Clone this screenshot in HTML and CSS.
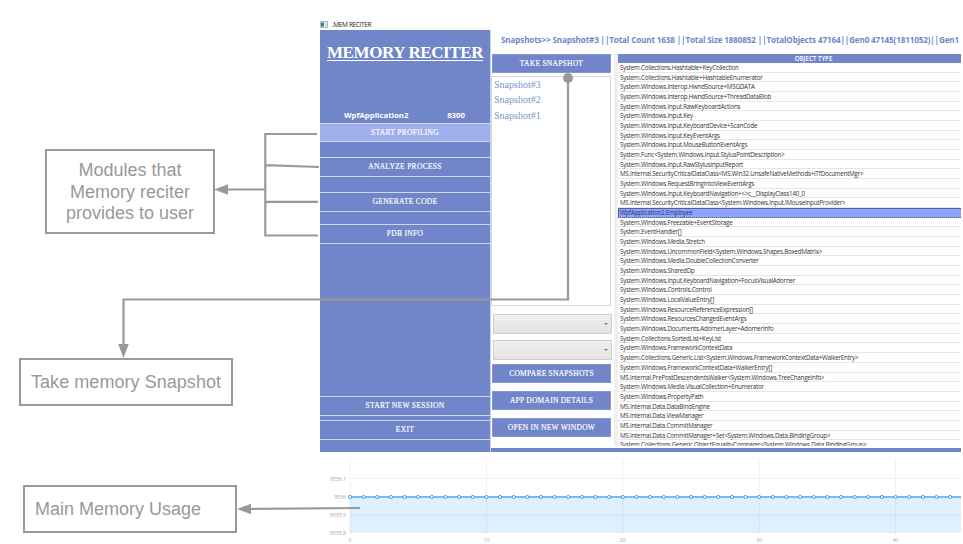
FILE: index.html
```html
<!DOCTYPE html>
<html lang="en">
<head>
<meta charset="utf-8">
<title>.MEM RECITER</title>
<link rel="stylesheet" href="styles.css">
</head>
<body>
<main class="window">
  <header class="titlebar">
    <svg class="app-icon" width="8" height="7" viewBox="0 0 8 7"><rect x=".5" y=".5" width="7" height="6" fill="#eef1f3" stroke="#b4bcc4"/><rect x="1" y="1.5" width="3" height="4" fill="#347f86"/><rect x="5" y="1.5" width="2" height="4" fill="#d5dadd"/></svg>
    <span>.MEM RECITER</span>
  </header>
  <div class="body">
    <nav class="sidebar">
      <div class="brand">
        <h1>MEMORY RECITER</h1>
        <p class="process"><span>WpfApplication2</span><span>8300</span></p>
      </div>
      <div class="nav-item active"><span>START PROFILING</span></div>
      <div class="nav-item second"><span>ANALYZE PROCESS</span></div>
      <div class="nav-item third"><span>GENERATE CODE</span></div>
      <div class="nav-item fourth"><span>PDB INFO</span></div>
      <div class="nav-item session"><span>START NEW SESSION</span></div>
      <div class="nav-item exit"><span>EXIT</span></div>
    </nav>
    <section class="content">
      <p class="summary">Snapshots&gt;&gt; Snapshot#3 ||Total Count 1638 ||Total Size 1880852 ||TotalObjects 47164||Gen0 47145(1811052)||Gen1</p>
      <div class="panes">
        <div class="snapshots">
          <div class="button">TAKE SNAPSHOT</div>
          <ul class="list"><li>Snapshot#3</li><li>Snapshot#2</li><li>Snapshot#1</li></ul>
          <div class="combo"></div>
          <div class="combo"></div>
          <div class="button low">COMPARE SNAPSHOTS</div>
          <div class="button low">APP DOMAIN DETAILS</div>
          <div class="button low">OPEN IN NEW WINDOW</div>
        </div>
        <div class="table">
          <div class="table-head">OBJECT TYPE</div>
          <div class="rows" id="rows"></div>
        </div>
      </div>
    </section>
  </div>
  <svg class="chart" id="chart" width="641" height="92" viewBox="320 452 641 92"></svg>
</main>

<div class="note modules">Modules that<br>Memory reciter<br>provides to user</div>
<div class="note take">Take memory Snapshot</div>
<div class="note usage">Main Memory Usage</div>
<svg class="connectors" width="963" height="544" viewBox="0 0 963 544">
  <g fill="none" stroke="#999" stroke-width="2.2">
    <path d="M317 134H265.3V235.5H318M265.3 165.2L319 167M265.3 201.8H318M265.3 189.5H226"/>
    <path d="M568 78V299.5H123.5V346"/>
    <path d="M250 509L360 508"/>
  </g>
  <g fill="#999">
    <circle cx="568" cy="78" r="5"/>
    <path d="M214 189.5L228 184.3V194.7ZM123.5 358L118.2 344H128.8ZM237 509L251 503.8V514.2Z"/>
  </g>
</svg>
<script src="app.js"></script>
</body>
</html>
```
FILE: styles.css
```css
* { box-sizing: border-box; }
body { margin: 0; width: 963px; height: 544px; overflow: hidden; position: relative; background: #fff; font-family: "Open Sans", "Noto Sans", sans-serif; }
h1, p, ul { margin: 0; padding: 0; }
.window { width: 641px; margin-left: 320px; padding-top: 18px; display: flex; flex-direction: column; }
.titlebar { height: 12px; display: flex; align-items: center; gap: 4px; font-size: 6.5px; letter-spacing: -.35px; color: #222; white-space: nowrap; }
.app-icon { display: block; }
.body { height: 422px; display: flex; background: #7086c8; }
.sidebar { width: 171px; display: flex; flex-direction: column; border-right: 1px solid #c9d2ed; color: #fff; }
.brand { height: 93px; }
.brand h1 { height: 77px; padding-top: 10px; text-align: center; font: bold 17px/25px "Liberation Serif", serif; letter-spacing: -.4px; text-decoration: underline; text-decoration-thickness: 1px; text-underline-offset: 2px; white-space: nowrap; }
.process { display: flex; justify-content: space-between; padding: 0 25px 0 24px; font-size: 7.8px; line-height: 16px; font-weight: 700; }
.nav-item { flex: none; height: 20px; border: solid #d0d8f1; border-width: 1px 0; display: flex; align-items: center; justify-content: center; font: 7.5px/18px "Liberation Serif", serif; letter-spacing: .3px; -webkit-text-stroke: .15px #fff; }
.active { height: 19px; background: #9eafeb; }
.second { margin-top: 15px; }
.third { margin-top: 15px; }
.fourth { margin-top: 12px; }
.session { margin-top: 152px; }
.exit { margin-top: 4px; }
.content { width: 470px; height: 418px; background: #fff; display: flex; flex-direction: column; }
.summary { height: 24px; padding: 2px 0 0 10px; font-size: 8.1px; line-height: 16px; font-weight: 700; letter-spacing: -.132px; color: #7086c8; white-space: nowrap; }
.panes { height: 392px; display: flex; }
.snapshots { width: 123px; padding: 0 2px 0 1px; }
.button { width: 119px; height: 19px; background: #7086c8; border: 1px solid #8798d1; color: #fff; text-align: center; font: 7.5px/17px "Liberation Serif", serif; letter-spacing: .25px; -webkit-text-stroke: .15px #fff; }
.list { list-style: none; width: 120px; height: 230px; margin: 3px 0 8px -1px; padding: 0 2px; border: 1px solid #d8d8d8; color: #7e92cf; font: 10px/15.3px "Liberation Serif", serif; }
.combo { position: relative; width: 119px; height: 20px; margin: 0 0 6px 1px; border: 1px solid #cfcfcf; background: linear-gradient(#f0f0f0, #e3e3e3); }
.combo::after { content: ""; position: absolute; right: 3px; top: 8px; border: 2px solid transparent; border-top: 2.5px solid #777; }
.low { margin: 0 0 8px; }
.combo + .low { margin-top: -2px; }
.table { width: 347px; height: 392px; border-left: 4px solid #f0f0f0; overflow: hidden; }
.table-head { height: 9px; background: #7086c8; color: #fff; text-align: center; font-size: 6.2px; line-height: 10px; font-weight: 600; padding-left: 48px; }
.rows { overflow: hidden; height: 383px; }
.row { height: 9.68px; padding-left: 2px; border-bottom: 1px solid #e6e6e6; color: #333; font-size: 6.2px; letter-spacing: -.2px; line-height: 10px; white-space: nowrap; }
.row.selected { background: #8ea3fb; border: solid #536191; border-width: 1px 0 1px 1px; border-bottom-style: dotted; padding-left: 1px; line-height: 8px; color: #26366e; }
.chart { display: block; }
.chart text { font: 5.2px "Open Sans", sans-serif; fill: #a4a4a4; }
.note { position: absolute; border: 2px solid #999; color: #999; background: #fff; font-family: "Liberation Sans", sans-serif; font-size: 18px; white-space: nowrap; }
.modules { left: 45px; top: 149px; width: 170px; height: 85px; padding-top: 9px; text-align: center; line-height: 21.5px; }
.take { left: 19px; top: 358px; width: 214px; height: 48px; padding-left: 10px; line-height: 45px; letter-spacing: .05px; }
.usage { left: 23px; top: 485px; width: 214px; height: 48px; padding-left: 10px; line-height: 45px; }
.connectors { position: absolute; left: 0; top: 0; }
```
FILE: app.js
```js
const types = `System.Collections.Hashtable+KeyCollection
System.Collections.Hashtable+HashtableEnumerator
System.Windows.Interop.HwndSource+MSGDATA
System.Windows.Interop.HwndSource+ThreadDataBlob
System.Windows.Input.RawKeyboardActions
System.Windows.Input.Key
System.Windows.Input.KeyboardDevice+ScanCode
System.Windows.Input.KeyEventArgs
System.Windows.Input.MouseButtonEventArgs
System.Func<System.Windows.Input.StylusPointDescription>
System.Windows.Input.RawStylusInputReport
MS.Internal.SecurityCriticalDataClass<MS.Win32.UnsafeNativeMethods+ITfDocumentMgr>
System.Windows.RequestBringIntoViewEventArgs
System.Windows.Input.KeyboardNavigation+<>c__DisplayClass140_0
MS.Internal.SecurityCriticalDataClass<System.Windows.Input.IMouseInputProvider>
WpfApplication2.Employee
System.Windows.Freezable+EventStorage
System.EventHandler[]
System.Windows.Media.Stretch
System.Windows.UncommonField<System.Windows.Shapes.BoxedMatrix>
System.Windows.Media.DoubleCollectionConverter
System.Windows.SharedDp
System.Windows.Input.KeyboardNavigation+FocusVisualAdorner
System.Windows.Controls.Control
System.Windows.LocalValueEntry[]
System.Windows.ResourceReferenceExpression[]
System.Windows.ResourcesChangedEventArgs
System.Windows.Documents.AdornerLayer+AdornerInfo
System.Collections.SortedList+KeyList
System.Windows.FrameworkContextData
System.Collections.Generic.List<System.Windows.FrameworkContextData+WalkerEntry>
System.Windows.FrameworkContextData+WalkerEntry[]
MS.Internal.PrePostDescendentsWalker<System.Windows.TreeChangeInfo>
System.Windows.Media.VisualCollection+Enumerator
System.Windows.PropertyPath
MS.Internal.Data.DataBindEngine
MS.Internal.Data.ViewManager
MS.Internal.Data.CommitManager
MS.Internal.Data.CommitManager+Set<System.Windows.Data.BindingGroup>
System.Collections.Generic.ObjectEqualityComparer<System.Windows.Data.BindingGroup>`.split("\n");
const rows = document.getElementById("rows");
types.forEach((name, i) => {
  const row = document.createElement("div");
  row.className = i === 15 ? "row selected" : "row";
  row.textContent = name;
  rows.append(row);
});

const step = 13.64;
let svg = "";
for (const y of [478.5, 515]) svg += `<path d="M350 ${y}H961" stroke="#f0f0f0"/>`;
for (let i = 0; i < 5; i++) {
  const x = 350 + i * step * 10;
  svg += `<path d="M${x} 459V534" stroke="#f0f0f0"/><text x="${x}" y="542.3" text-anchor="middle">${i * 10}</text>`;
}
svg += `<path d="M350 497H961V533H350Z" fill="#2196f3" fill-opacity=".15"/><path d="M350 497H961" stroke="#73bdf6" stroke-width="2"/>`;
for (let i = 0; i < 45; i++) svg += `<circle cx="${350 + i * step}" cy="497" r="1.6" fill="#fff" stroke="#3ca2f3"/>`;
[["9536.1", 480.8], ["9536", 499], ["9535.9", 517.2], ["9535.8", 535.2]].forEach(([label, y]) => {
  svg += `<text x="346" y="${y}" text-anchor="end">${label}</text>`;
});
document.getElementById("chart").innerHTML = svg;
```
